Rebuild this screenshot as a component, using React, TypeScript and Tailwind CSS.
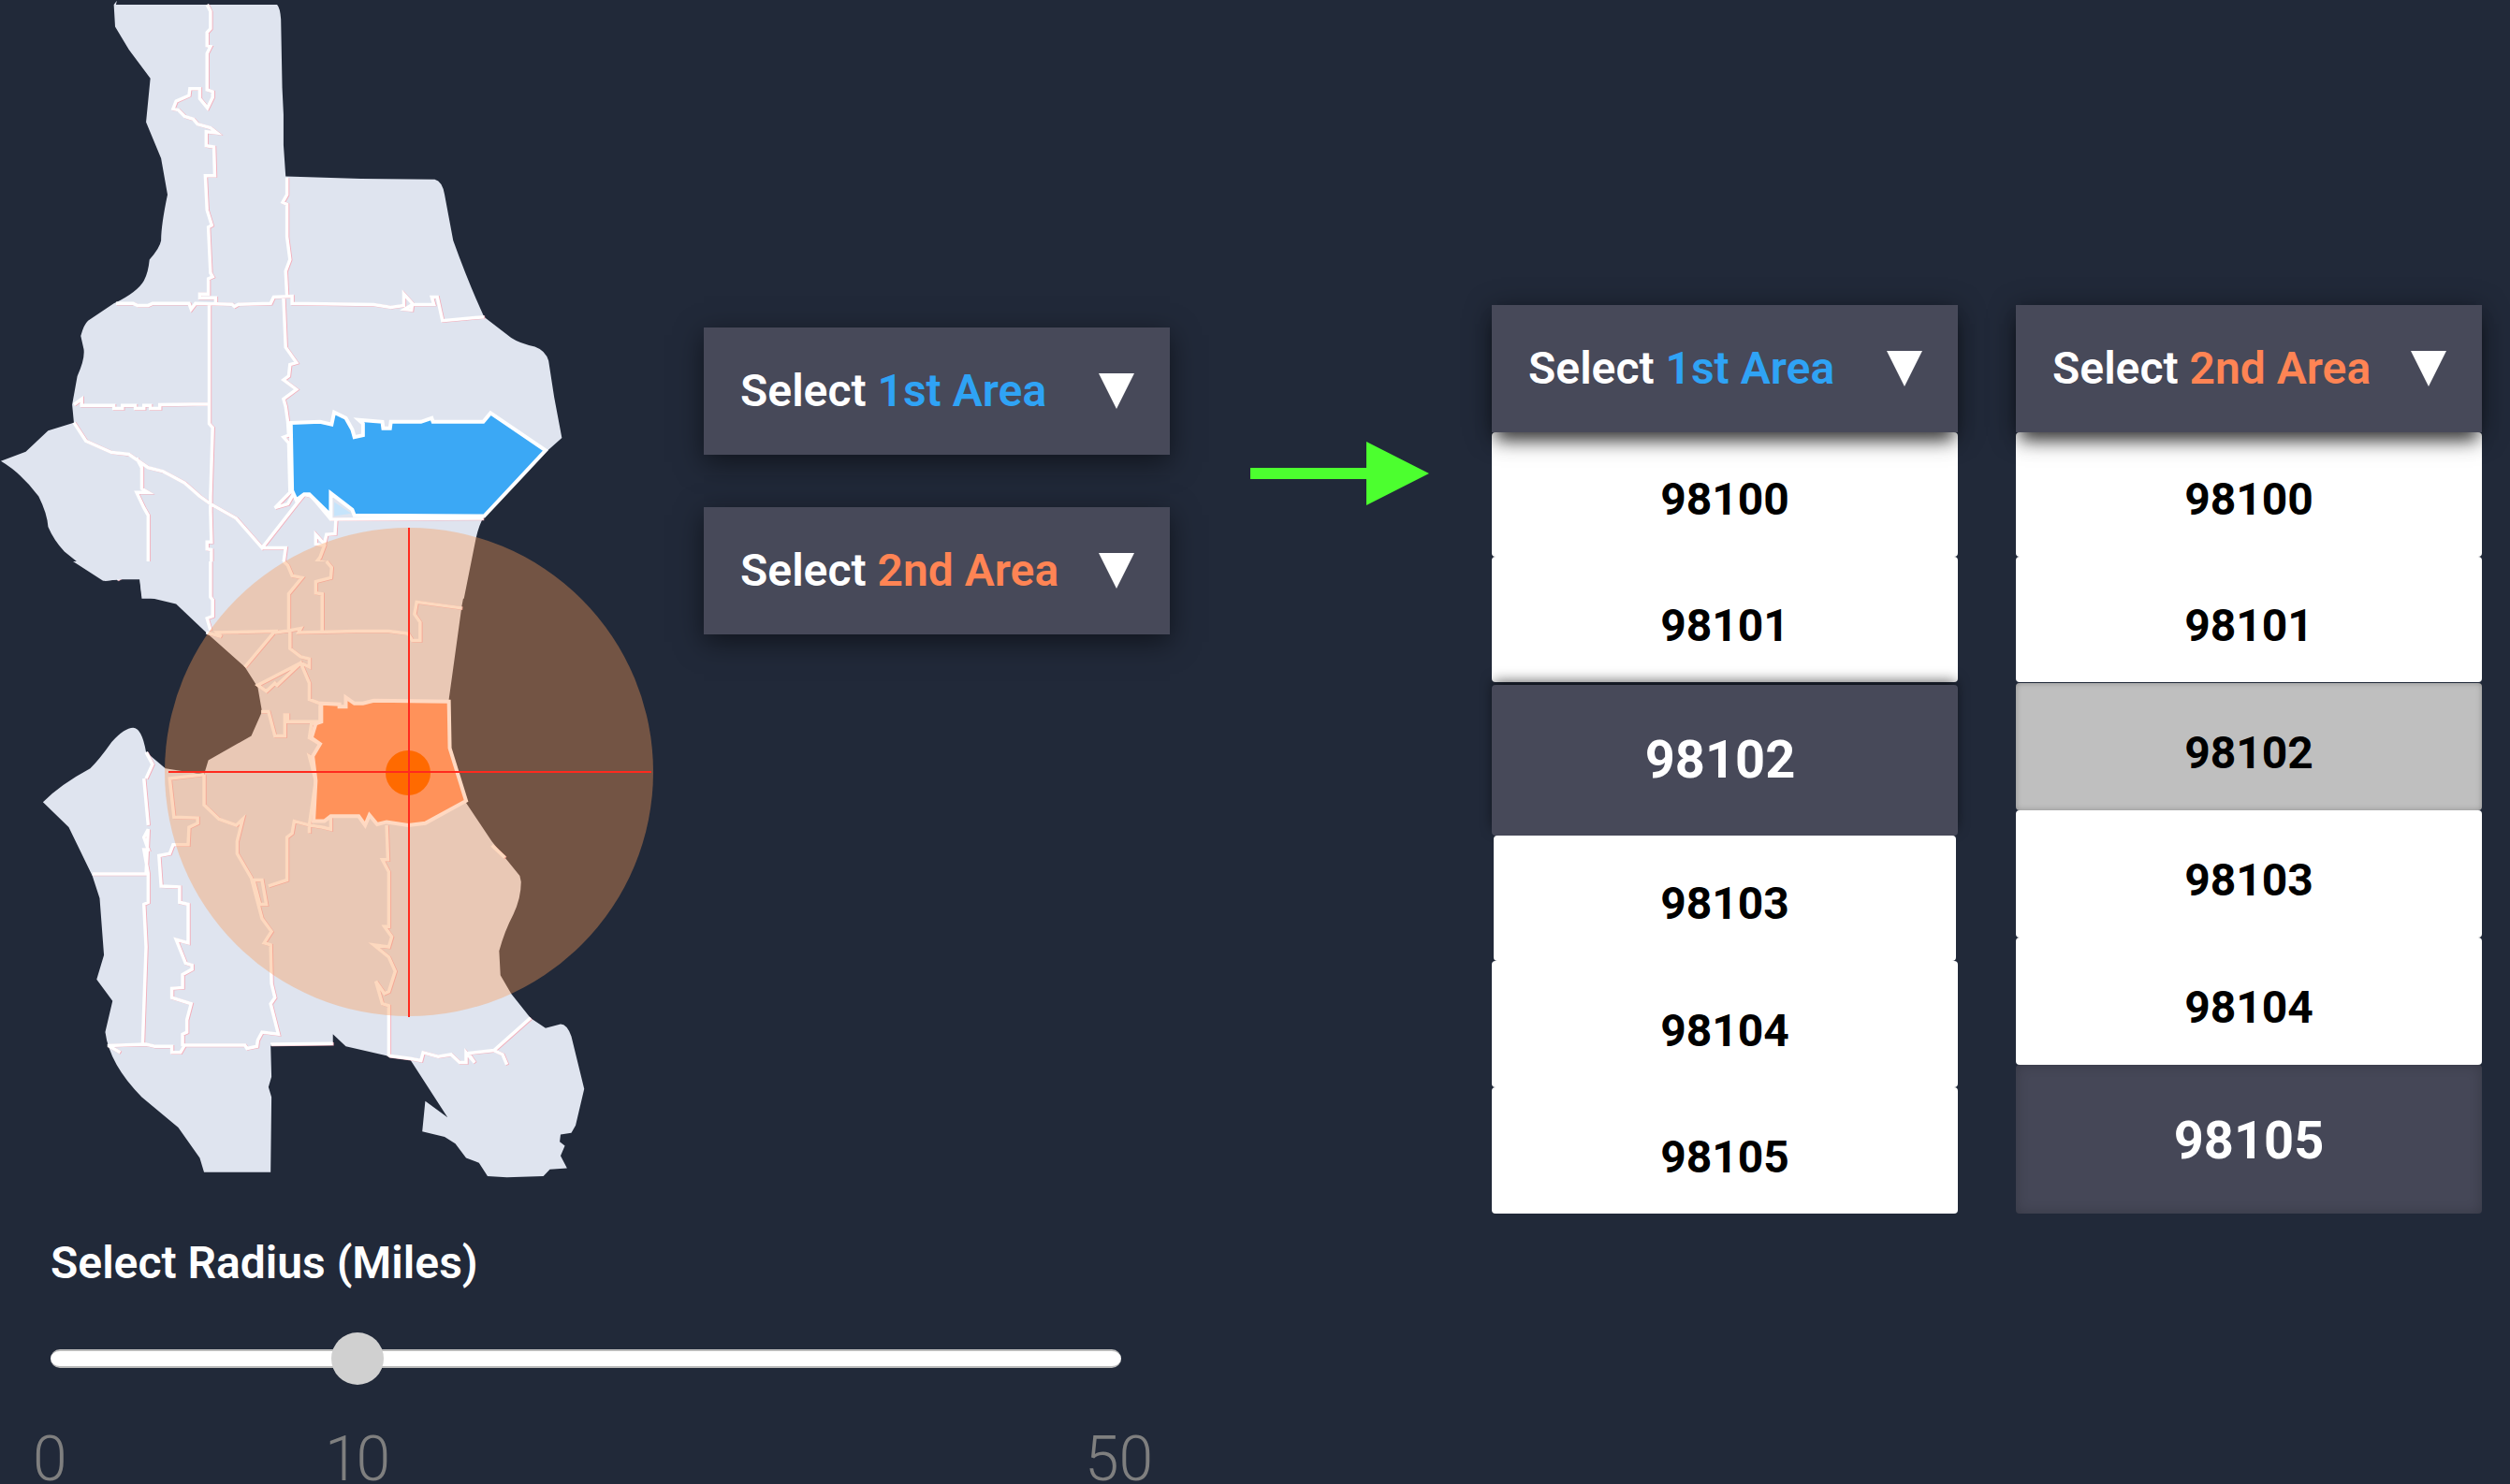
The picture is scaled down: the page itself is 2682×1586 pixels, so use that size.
const Z1_LAND =
  "M265,12 L272,2 L270,12 L645,12 Q652,20 654,50 L657,230 L660,300 L660,380 L665,462 L840,468 L1012,470 Q1030,475 1035,510 L1045,570 L1055,630 Q1090,740 1127,830 L1190,885 Q1210,900 1245,908 Q1270,918 1277,945 L1290,1040 L1308,1147 L1270,1185 L1127,1352 Q1115,1375 1108,1410 L1080,1568 L330,1568 L325,1518 L275,1518 L245,1522 L200,1490 L150,1445 Q125,1415 112,1380 Q110,1345 90,1300 Q50,1240 2,1208 L60,1183 L112,1128 L172,1107 L168,1060 L180,985 Q198,940 195,915 L188,880 Q195,850 205,840 L265,795 Q320,765 335,735 Q345,715 348,680 Q372,650 375,630 Q375,590 390,510 L375,415 L340,320 L350,205 L300,130 L268,70 Z";

const Z2_LAND =
  "M170,0 L240,48 L275,45 L325,40 L330,85 L410,105 L480,175 L570,260 L600,310 L610,370 L585,430 L485,490 L475,525 L385,510 L340,470 Q330,410 310,410 Q290,410 260,445 Q230,490 210,510 Q140,550 100,593 L160,655 L215,775 L232,830 L242,970 L225,1030 L262,1083 L245,1160 Q255,1240 330,1320 L415,1395 L465,1470 L475,1505 L630,1505 L632,1320 L625,1295 L632,1270 L630,1190 L775,1188 L775,1165 L805,1195 L900,1218 L955,1228 L1042,1370 L990,1330 L983,1405 L1035,1418 L1060,1435 L1085,1470 L1115,1482 L1135,1515 L1180,1518 L1265,1515 L1280,1498 L1320,1495 L1305,1465 L1315,1440 L1303,1430 L1305,1412 L1330,1408 L1340,1390 L1360,1300 L1330,1170 Q1320,1140 1305,1140 L1270,1150 L1235,1125 L1190,1065 L1165,1020 L1162,960 Q1175,910 1195,870 Q1213,830 1213,790 L1210,775 L1145,690 L1085,595 L1050,470 L1045,340 L1075,110 L1095,0 Z";

const Z1_LINES =
  "M482,12 L490,30 L490,75 L482,85 L482,120 L490,122 L482,140 L482,235 L495,240 L495,255 L483,283 L465,258 L465,232 L442,232 L440,250 L410,265 L403,285 L415,288 L430,305 L450,312 L460,325 L490,335 L505,348 L480,345 L480,382 L498,385 L500,460 L478,460 L482,550 L493,590 L485,595 L490,715 L495,725 L485,730 L485,770 L465,770 L465,780 L502,780 L502,795 " +
  "M487,795 L487,1110 L495,1120 L490,1300 L490,1340 L492,1420 L482,1420 L482,1438 L492,1440 L492,1478 L482,1480 L487,1568 " +
  "M270,795 L310,795 L320,800 L345,800 L355,795 L440,795 L445,810 L455,795 L540,797 L546,803 L555,797 L630,795 L637,778 L680,776 L680,795 L870,798 L910,805 L940,800 L940,770 L960,795 L958,812 L942,810 L960,798 L1010,797 L1005,778 L1018,778 L1030,840 L1127,830 " +
  "M668,465 L668,510 L658,530 L668,535 L668,620 L675,680 L665,710 L668,775 M660,780 L665,910 L690,950 L675,955 L672,985 L660,995 L690,1020 L660,1045 L665,1065 L670,1105 L672,1140 L660,1145 L672,1160 L675,1290 L640,1330 L670,1320 L685,1290 " +
  "M172,1060 L190,1045 L190,1062 L265,1062 L265,1070 L285,1070 L285,1062 L315,1062 L315,1070 L335,1070 L335,1062 L350,1062 L350,1070 L372,1070 L372,1060 L487,1058 " +
  "M172,1107 L200,1155 L260,1185 L300,1190 L345,1225 L380,1235 L430,1265 L465,1300 L490,1320 L550,1358 L610,1435 L690,1320 L708,1295 L725,1300 L770,1360 L1125,1358 " +
  "M318,1200 L330,1225 L330,1280 L345,1290 L318,1290 L335,1330 L345,1350 L345,1490 L357,1505 L290,1505 L272,1518 " +
  "M610,1435 L665,1435 L660,1475 L680,1505 L700,1515 L672,1560 L672,1568 " +
  "M782,1360 L780,1398 L760,1400 L755,1425 L735,1400 L735,1425 L755,1430 L745,1460 L738,1470 L765,1475 L772,1500 L760,1518 L735,1530 L738,1558 L760,1568";

const Z2_LINES =
  "M490,0 L490,88 L495,95 L495,135 L482,140 L490,170 " +
  "M480,175 L515,185 L505,175 L640,172 L570,260 " +
  "M640,175 L675,170 L700,165 L695,175 L830,172 L905,172 L950,178 L960,195 L978,195 L978,150 L965,130 L970,100 L1075,115 " +
  "M750,170 L750,80 L735,78 L735,50 L770,40 L772,15 L760,0 " +
  "M672,170 L672,80 L703,40 L680,35 L670,10 L660,0 " +
  "M675,170 L675,215 L700,235 L720,240 L720,260 L700,250 L600,305 L620,320 L630,310 L640,300 L645,305 L660,290 L700,250 L720,300 L720,340 L745,350 L745,395 L725,400 L720,435 L745,450 L735,490 L720,480 L735,540 L720,650 L720,670 " +
  "M745,395 L670,395 L670,378 L663,378 L663,430 L640,430 L625,370 L608,370 " +
  "M475,525 L395,535 L405,630 L460,632 L460,645 L440,655 L438,698 L403,698 L395,720 L370,725 L375,800 L418,802 L418,840 L438,845 L438,940 L410,932 L432,990 L447,995 L447,1005 L425,1018 L425,1050 L400,1052 L400,1075 L445,1090 L435,1130 L435,1160 L425,1165 L425,1195 " +
  "M475,525 L475,600 L510,635 L550,650 L565,635 L552,690 L552,720 L585,780 L610,880 L632,912 L615,940 L630,945 L632,1040 L640,1075 L630,1090 L648,1165 L610,1160 L600,1180 L598,1195 L575,1200 L570,1192 L430,1192 L420,1210 L400,1210 L400,1195 L360,1195 L340,1190 L250,1193 " +
  "M585,785 L610,785 L620,845 L605,845 L590,785 M625,800 L668,785 L668,680 L680,670 L685,640 L720,650 L750,655 L770,660 L770,630 " +
  "M900,650 L903,735 L890,735 L905,765 L905,900 L895,900 L912,925 L905,950 L870,945 L905,975 L920,1010 L905,1060 L895,1065 L875,1035 L890,1090 L905,1095 L905,1220 " +
  "M215,770 L340,770 L345,660 L335,680 L345,710 L335,710 L345,770 L345,840 L335,845 L340,950 L332,1190 " +
  "M340,535 L355,500 L340,470 M335,535 L345,650 " +
  "M1235,1125 L1150,1205 L1090,1212 L1105,1235 L1085,1210 L1085,1235 L1070,1235 L1050,1215 L1020,1220 L985,1210 L980,1230 L955,1225 L905,1218 " +
  "M1150,1205 L1170,1215 L1180,1240 M1145,700 L1175,730 M255,1195 L280,1210 M630,1190 L775,1188";

const BLUE =
  "677,1108 745,1105 772,1112 778,1080 805,1095 820,1125 825,1145 845,1140 845,1110 835,1100 890,1105 892,1122 908,1122 910,1105 980,1105 1005,1095 1008,1105 1125,1105 1142,1082 1270,1180 1127,1352 825,1350 820,1335 770,1292 770,1350 720,1295 708,1295 690,1310 680,1285";

const ORANGE =
  "748,350 790,352 790,358 805,358 805,335 825,350 845,350 870,343 1045,345 1047,460 1085,590 990,645 950,650 900,642 878,648 860,625 850,650 835,628 770,628 755,640 730,640 735,540 728,480 745,450 725,435 735,400 748,395";

function Lines({ d }: { d: string }) {
  return (
    <>
      <path d={d} transform="translate(2,1)" fill="none" stroke="#f2aebb" strokeWidth={3.5} vectorEffect="non-scaling-stroke" />
      <path d={d} fill="none" stroke="#ffffff" strokeWidth={3.5} vectorEffect="non-scaling-stroke" />
    </>
  );
}

function AreaMap() {
  return (
    <svg viewBox="0 0 752 1290" className="block h-[1290px] w-[752px]">
      <g transform="scale(0.459,0.408)">
        <path d={Z1_LAND} fill="#dfe4ef" />
        <Lines d={Z1_LINES} />
        <polygon points={BLUE} fill="#3ba8f5" stroke="#ffffff" strokeWidth={4} vectorEffect="non-scaling-stroke" />
        <polygon points="778,1315 818,1345 778,1352" fill="#c5e4fb" />
      </g>
      <g transform="translate(0,600) scale(0.459,0.4337)">
        <path d={Z2_LAND} fill="#dfe4ef" />
        <Lines d={Z2_LINES} />
      </g>
      {/* radius circle */}
      <circle cx={437} cy={825} r={261} fill="#fa9a56" fillOpacity={0.38} />
      <g transform="translate(0,600) scale(0.459,0.4337)">
        <polygon points={ORANGE} fill="#ff925a" stroke="#ffd9c2" strokeWidth={4} vectorEffect="non-scaling-stroke" />
      </g>
      <ellipse cx={436} cy={826} rx={24} ry={24} fill="#ff6a00" />
      <rect x={436} y={564} width={2} height={523} fill="#ff2a1e" />
      <rect x={180} y={824} width={516} height={2} fill="#ff2a1e" />
    </svg>
  );
}

function Caret() {
  return (
    <svg viewBox="0 0 38 38" className="h-[38px] w-[38px]">
      <polygon points="0,0 38,0 19,38" fill="#ffffff" />
    </svg>
  );
}

function SelectBox({ n, color, className = "" }: { n: string; color: string; className?: string }) {
  return (
    <div className={"relative z-10 flex h-[136px] w-[498px] items-center justify-between bg-[#474959] pl-[39px] pr-[38px] text-[48px] font-semibold text-white " + className}>
      <span>
        Select <span className={color}>{n} Area</span>
      </span>
      <Caret />
    </div>
  );
}

function Item({ label, className }: { label: string; className: string }) {
  return <div className={"flex items-center justify-center rounded-[4px] " + className}>{label}</div>;
}

export default function App() {
  return (
    <div className="flex h-[1586px] w-[2682px] overflow-hidden bg-[#212939] font-['Roboto',sans-serif]">
      <div className="w-[752px] shrink-0">
        <AreaMap />
        <div className="mt-[32px] pl-[54px] text-[48px] font-semibold leading-[56px] text-white">Select Radius (Miles)</div>
        <div className="relative ml-[54px] mt-[64px] h-[20px] w-[1144px] rounded-full border-y-2 border-[#bbbbbb] bg-white">
          <div className="absolute left-[300px] top-[-20px] h-[56px] w-[56px] rounded-full bg-[#d0d0d0]" />
        </div>
        <div className="mt-[65px] flex w-[1300px] pl-[35px] text-[66px] font-light leading-[66px] text-[#7f7f7f]">
          <span className="w-[312px]">0</span>
          <span className="w-[812px] tracking-[-3px]">10</span>
          <span>50</span>
        </div>
      </div>

      <div className="flex w-[498px] shrink-0 flex-col gap-[56px] pt-[350px]">
        <SelectBox n="1st" color="text-[#2fa3f5]" className="shadow-[0_8px_28px_rgba(0,0,0,0.5)]" />
        <SelectBox n="2nd" color="text-[#ff8454]" className="shadow-[0_8px_28px_rgba(0,0,0,0.5)]" />
      </div>

      <svg viewBox="0 0 191 68" className="ml-[86px] mt-[472px] h-[68px] w-[191px] shrink-0">
        <polygon points="0,28 124,28 124,0 191,34 124,68 124,40 0,40" fill="#4cff2f" />
      </svg>

      <div className="ml-[67px] flex w-[498px] shrink-0 flex-col pt-[326px] text-[48px] font-bold text-black">
        <SelectBox n="1st" color="text-[#2fa3f5]" className="shadow-[0_14px_16px_-6px_rgba(0,0,0,0.65),0_4px_28px_rgba(0,0,0,0.4)]" />
        <Item label="98100" className="h-[133px] bg-white pt-[10px]" />
        <Item label="98101" className="h-[134px] bg-white pt-[14px]" />
        <Item label="98102" className="relative z-10 mt-[3px] h-[161px] bg-[#474959] pb-[2px] pr-[10px] text-[56px] text-white shadow-[0_-6px_14px_-2px_rgba(0,0,0,0.6)]" />
        <Item label="98103" className="relative z-20 mx-[2px] h-[134px] bg-white pt-[12px]" />
        <Item label="98104" className="relative z-20 h-[135px] bg-white pt-[14px]" />
        <Item label="98105" className="h-[135px] bg-white pt-[14px]" />
      </div>

      <div className="ml-[62px] flex w-[498px] shrink-0 flex-col pt-[326px] text-[48px] font-bold text-black">
        <SelectBox n="2nd" color="text-[#ff8454]" className="shadow-[0_14px_16px_-6px_rgba(0,0,0,0.65),0_4px_28px_rgba(0,0,0,0.4)]" />
        <Item label="98100" className="h-[133px] bg-white pt-[10px]" />
        <Item label="98101" className="h-[134px] bg-white pt-[14px]" />
        <Item label="98102" className="mt-[1px] h-[136px] bg-[#bfbfbf] pt-[14px] shadow-[inset_0_0_6px_rgba(0,0,0,0.25)]" />
        <Item label="98103" className="h-[136px] bg-white pt-[14px]" />
        <Item label="98104" className="h-[136px] bg-white pt-[14px]" />
        <Item label="98105" className="h-[159px] bg-[#454757] pt-[2px] text-[56px] text-white shadow-[inset_0_0_14px_rgba(0,0,0,0.2)]" />
      </div>
    </div>
  );
}
